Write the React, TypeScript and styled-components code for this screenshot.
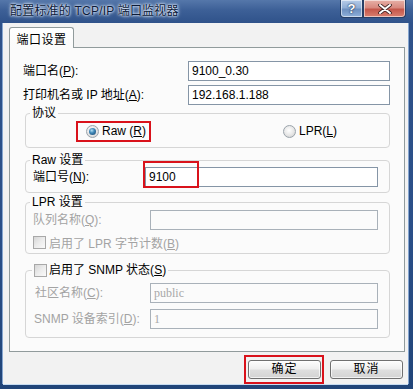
import React from "react";
import styled, { createGlobalStyle } from "styled-components";

const GlobalStyle = createGlobalStyle`
  html, body {
    margin: 0;
    padding: 0;
  }
  body {
    width: 413px;
    height: 389px;
    overflow: hidden;
    background: #ffffff;
    font-family: "Liberation Sans", "Noto Sans CJK SC", sans-serif;
    font-size: 12px;
    color: #000;
  }
  u {
    text-decoration: underline;
    text-underline-offset: 1px;
  }
`;

const RED = "#d9121b";

const Window = styled.div`
  width: 413px;
  height: 389px;
  box-sizing: border-box;
  display: flex;
  flex-direction: column;
  padding-bottom: 6px;
  background: linear-gradient(
    to bottom,
    #5577aa 0px,
    #3d6097 10px,
    #2f528a 23px,
    #2a4f88 60%,
    #214579 100%
  );
`;

const TitleBar = styled.div`
  height: 23px;
  flex-shrink: 0;
  display: flex;
  align-items: center;
  padding-left: 10px;
  padding-right: 7px;
`;

const Title = styled.div`
  flex: 1;
  font-size: 12px;
  line-height: 23px;
  color: #0b1a38;
  letter-spacing: 0.2px;
  text-shadow: 0 0 2px #e6efff, 0 0 3px #e6efff, 0 0 4px rgba(230, 240, 255, 0.8);
`;

const CaptionButtons = styled.div`
  align-self: flex-start;
  display: flex;
`;

const CaptionButton = styled.div<{ $close?: boolean }>`
  width: ${(p) => (p.$close ? 43 : 23)}px;
  height: 18px;
  box-sizing: border-box;
  display: flex;
  align-items: center;
  justify-content: center;
  border: 1px solid #263f66;
  border-top: none;
  border-radius: ${(p) => (p.$close ? "0 0 4px 0" : "0 0 0 4px")};
  box-shadow: inset 0 0 0 1px rgba(255, 255, 255, 0.55);
  background: ${(p) =>
    p.$close
      ? "linear-gradient(to bottom, #e7b1a8 0%, #d8897f 45%, #c4574b 55%, #d97f6f 100%)"
      : "linear-gradient(to bottom, #b7cce8 0%, #90aed6 45%, #6d90c0 55%, #8fb0da 100%)"};
  color: #fff;
  font-weight: bold;
  font-size: 13px;
  text-shadow: 0 0 2px #1c2f50, 0 0 1px #1c2f50;
`;

const Client = styled.div`
  flex: 1;
  margin: 0 5px 0 3px;
  display: flex;
  flex-direction: column;
  padding: 4px 3px 0 6px;
  background: #f2f2f2;
  box-shadow: 0 1px 0 #c6dcf2, -1px 0 0 #86a6d0, 1px 0 0 #86a6d0;
`;

const TabStrip = styled.div`
  display: flex;
`;

const Tab = styled.div`
  position: relative;
  z-index: 1;
  width: 65px;
  height: 21px;
  box-sizing: border-box;
  margin-bottom: -1px;
  display: flex;
  align-items: center;
  justify-content: center;
  border: 1px solid #919b9c;
  border-bottom: none;
  border-radius: 3px 3px 0 0;
  background: linear-gradient(to bottom, #ffffff 0%, #fcfcfc 60%, #fbfbfb 100%);
  font-size: 12px;
  letter-spacing: 0.5px;
`;

const Panel = styled.div`
  height: 305px;
  box-sizing: border-box;
  border: 1px solid #919b9c;
  background: #fbfbfb;
  padding: 13px 14px 0 13px;
  display: flex;
  flex-direction: column;
`;

const FieldRow = styled.div<{ $gap?: number }>`
  display: flex;
  align-items: center;
  height: 20px;
  margin-top: ${(p) => p.$gap ?? 0}px;
`;

const Label = styled.div<{ $width: number; $disabled?: boolean; $indent?: number }>`
  width: ${(p) => p.$width}px;
  flex-shrink: 0;
  box-sizing: border-box;
  padding-left: ${(p) => p.$indent ?? 0}px;
  line-height: 14px;
  white-space: nowrap;
  color: ${(p) => (p.$disabled ? "#a3a3a3" : "#000")};
`;

const InputWrap = styled.div`
  position: relative;
  flex: 1;
  height: 20px;
`;

const TextInput = styled.input`
  width: 100%;
  height: 20px;
  box-sizing: border-box;
  margin: 0;
  padding: 0 3px;
  border: 1px solid #8595a6;
  background: #ffffff;
  font-family: "Liberation Sans", "Noto Sans CJK SC", sans-serif;
  font-size: 12px;
  color: #000;
  outline: none;

  &:disabled {
    border-color: #a9b1b9;
    background: #fbfbfb;
    color: #a8a8a8;
    font-family: "Liberation Serif", serif;
    font-size: 12px;
  }
`;

const Highlight = styled.div`
  position: absolute;
  left: -2px;
  top: -6px;
  width: 56px;
  height: 27px;
  box-sizing: border-box;
  border: 2px solid ${RED};
  pointer-events: none;
`;

const Group = styled.fieldset<{ $top: number }>`
  margin: ${(p) => p.$top}px 0 0 2px;
  padding: 0;
  min-width: 0;
  border: 1px solid #d6d6d6;
  border-radius: 4px;
`;

const Legend = styled.legend<{ $offset?: number }>`
  margin-left: ${(p) => p.$offset ?? 4}px;
  padding: 0 2px;
  height: 14px;
  line-height: 14px;
  display: flex;
  align-items: center;
  gap: 2px;
  white-space: nowrap;
`;

const GroupBody = styled.div<{ $pad: string }>`
  display: flex;
  flex-direction: column;
  padding: ${(p) => p.$pad};
`;

const RadioRow = styled.div`
  height: 22px;
  display: flex;
  align-items: center;
  padding-left: 50px;
`;

const RadioOption = styled.div<{ $marked?: boolean; $left?: number }>`
  display: flex;
  align-items: center;
  gap: 3px;
  height: 21px;
  box-sizing: border-box;
  margin-left: ${(p) => p.$left ?? 0}px;
  padding: ${(p) => (p.$marked ? "0 3px 0 8px" : "0")};
  border: ${(p) => (p.$marked ? `2px solid ${RED}` : "none")};
  white-space: nowrap;
`;

const RadioDot = styled.span<{ $checked?: boolean }>`
  width: 13px;
  height: 13px;
  box-sizing: border-box;
  border-radius: 50%;
  border: 1px solid #9aa3ab;
  background: radial-gradient(circle at 45% 40%, #ffffff 0%, #e6e6e6 55%, #c8c8c8 100%);
  display: flex;
  align-items: center;
  justify-content: center;

  &::after {
    content: "";
    display: ${(p) => (p.$checked ? "block" : "none")};
    width: 7px;
    height: 7px;
    border-radius: 50%;
    background: radial-gradient(circle at 40% 35%, #b4e0f4 0%, #3f88b8 40%, #173f68 100%);
  }
`;

const CheckRow = styled.div<{ $gap?: number; $disabled?: boolean }>`
  display: flex;
  align-items: center;
  gap: 3px;
  height: 16px;
  margin-top: ${(p) => p.$gap ?? 0}px;
  white-space: nowrap;
  color: ${(p) => (p.$disabled ? "#a3a3a3" : "#000")};
`;

const CheckBox = styled.span`
  width: 13px;
  height: 13px;
  flex-shrink: 0;
  box-sizing: border-box;
  border: 1px solid #a8a8a8;
  background: linear-gradient(135deg, #d6d6d6 0%, #ececec 50%, #fafafa 100%);
`;

const ButtonRow = styled.div`
  display: flex;
  justify-content: flex-end;
  align-items: center;
  gap: 6px;
  padding: 3px 2px 0 0;
`;

const Marked = styled.div`
  padding: 3px 1px 3px 2px;
  border: 2px solid ${RED};
  display: flex;
`;

const PushButton = styled.button`
  width: 73px;
  height: 19px;
  box-sizing: border-box;
  margin: 0;
  padding: 0;
  border: 1px solid #707070;
  border-radius: 3px;
  background: linear-gradient(to bottom, #fdfdfd 0%, #efefef 45%, #dedede 55%, #d3d3d3 100%);
  box-shadow: inset 0 0 0 1px rgba(255, 255, 255, 0.7);
  font-family: "Liberation Sans", "Noto Sans CJK SC", sans-serif;
  font-size: 12px;
  letter-spacing: 1px;
  color: #000;
  line-height: 17px;
`;

const CloseGlyph = () => (
  <svg width="14" height="10" viewBox="0 0 14 10">
    <path d="M2 1 L12 9 M12 1 L2 9" stroke="#3a2020" strokeWidth="3.6" strokeLinecap="round" />
    <path d="M2 1 L12 9 M12 1 L2 9" stroke="#ffffff" strokeWidth="2" strokeLinecap="round" />
  </svg>
);

export default function App() {
  return (
    <>
      <GlobalStyle />
      <Window>
        <TitleBar>
          <Title>配置标准的 TCP/IP 端口监视器</Title>
          <CaptionButtons>
            <CaptionButton>?</CaptionButton>
            <CaptionButton $close>
              <CloseGlyph />
            </CaptionButton>
          </CaptionButtons>
        </TitleBar>

        <Client>
          <TabStrip>
            <Tab>端口设置</Tab>
          </TabStrip>

          <Panel>
            <FieldRow>
              <Label $width={165}>
                端口名(<u>P</u>):
              </Label>
              <InputWrap>
                <TextInput defaultValue="9100_0.30" />
              </InputWrap>
            </FieldRow>
            <FieldRow $gap={4}>
              <Label $width={165}>
                打印机名或 IP 地址(<u>A</u>):
              </Label>
              <InputWrap>
                <TextInput defaultValue="192.168.1.188" />
              </InputWrap>
            </FieldRow>

            <Group $top={1}>
              <Legend>协议</Legend>
              <GroupBody $pad="0 11px 5px 0">
                <RadioRow>
                  <RadioOption $marked>
                    <RadioDot $checked />
                    <span>
                      Raw (<u>R</u>)
                    </span>
                  </RadioOption>
                  <RadioOption $left={132}>
                    <RadioDot />
                    <span>
                      LPR(<u>L</u>)
                    </span>
                  </RadioOption>
                </RadioRow>
              </GroupBody>
            </Group>

            <Group $top={5}>
              <Legend>Raw 设置</Legend>
              <GroupBody $pad="0 11px 5px 7px">
                <FieldRow>
                  <Label $width={112}>
                    端口号(<u>N</u>):
                  </Label>
                  <InputWrap>
                    <TextInput defaultValue="9100" />
                    <Highlight />
                  </InputWrap>
                </FieldRow>
              </GroupBody>
            </Group>

            <Group $top={2}>
              <Legend>LPR 设置</Legend>
              <GroupBody $pad="1px 11px 3px 7px">
                <FieldRow>
                  <Label $width={117} $disabled>
                    队列名称(<u>Q</u>):
                  </Label>
                  <InputWrap>
                    <TextInput disabled defaultValue="" />
                  </InputWrap>
                </FieldRow>
                <CheckRow $gap={4} $disabled>
                  <CheckBox />
                  <span>
                    启用了 LPR 字节计数(<u>B</u>)
                  </span>
                </CheckRow>
              </GroupBody>
            </Group>

            <Group $top={9}>
              <Legend $offset={6}>
                <CheckBox />
                <span>
                  启用了 SNMP 状态(<u>S</u>)
                </span>
              </Legend>
              <GroupBody $pad="6px 11px 8px 7px">
                <FieldRow>
                  <Label $width={117} $disabled $indent={2}>
                    社区名称(<u>C</u>):
                  </Label>
                  <InputWrap>
                    <TextInput disabled defaultValue="public" />
                  </InputWrap>
                </FieldRow>
                <FieldRow $gap={6}>
                  <Label $width={117} $disabled $indent={1}>
                    SNMP 设备索引(<u>D</u>):
                  </Label>
                  <InputWrap>
                    <TextInput disabled defaultValue="1" />
                  </InputWrap>
                </FieldRow>
              </GroupBody>
            </Group>
          </Panel>

          <ButtonRow>
            <Marked>
              <PushButton>确定</PushButton>
            </Marked>
            <PushButton>取消</PushButton>
          </ButtonRow>
        </Client>
      </Window>
    </>
  );
}
